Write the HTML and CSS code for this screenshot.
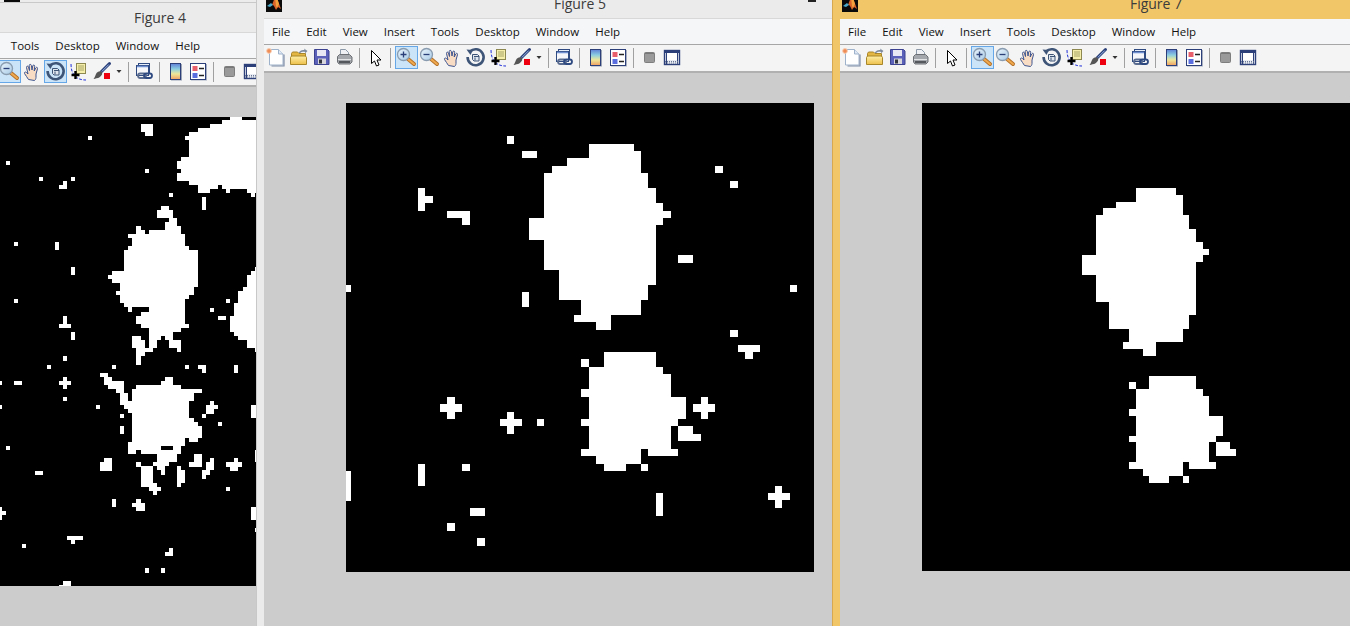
FILE: index.html
```html
<!DOCTYPE html>
<html lang="en">
<head>
<meta charset="utf-8">
<title>Figures</title>
<link rel="stylesheet" href="styles.css">
</head>
<body>
<svg class="defs" aria-hidden="true">
  <defs>
    <linearGradient id="cb" x1="0" y1="0" x2="0" y2="1">
      <stop offset="0" stop-color="#5f7fd8"/><stop offset=".35" stop-color="#8ccfe0"/><stop offset=".65" stop-color="#eee79a"/><stop offset="1" stop-color="#f0a060"/>
    </linearGradient>
    <linearGradient id="lens" x1="0" y1="0" x2="1" y2="1">
      <stop offset="0" stop-color="#eaf4fc"/><stop offset="1" stop-color="#a9cbe6"/>
    </linearGradient>
    <linearGradient id="fold" x1="0" y1="0" x2="0" y2="1">
      <stop offset="0" stop-color="#fdeea6"/><stop offset="1" stop-color="#eec04a"/>
    </linearGradient>
    <symbol id="logo" viewBox="0 0 16 16">
      <rect width="16" height="16" fill="#0a0a0a"/>
      <path d="M6 9l3-8 2 1 4 11-3-2-2 3-2-4-1-1z" fill="#d9632a"/>
      <path d="M9 1l2 1 2 6-2 4-1-2z" fill="#f2a23c"/>
      <path d="M1 10l4-3 2 2-3 2z" fill="#4aa8c8"/>
    </symbol>
    <symbol id="new" viewBox="0 0 23 23">
      <path d="M5.500 3.500h9l4.500 4.500v11h-13.500z" fill="#fff" stroke="#9fb2cc"/>
      <path d="M20 8.500v11.500H7.500" fill="none" stroke="#7d8ca6" stroke-width="1.200"/>
      <path d="M14.500 3.500v4.500h4.500" fill="#dfe8f4" stroke="#9fb2cc"/>
      <circle cx="5" cy="5" r="2.400" fill="#ef8c55" stroke="#f8cdb0"/>
    </symbol>
    <symbol id="open" viewBox="0 0 23 23">
      <path d="M4.500 18.500v-11l1-1.500h5l1.500 1.500h6.500v11z" fill="#e3b643" stroke="#a8862a"/>
      <path d="M3.500 18.500v-7l1-1.500h14l1 1.500v7z" fill="url(#fold)" stroke="#a8862a"/>
      <path d="M11.500 7c1.500-2.500 3.500-3.500 6-3l-.5-1.500 3.500 2.500-2.500 2.500.2-1.500c-2-.5-4 0-5 1z" fill="#7f8ca0"/>
    </symbol>
    <symbol id="save" viewBox="0 0 23 23">
      <path d="M4.500 3.500h13l1.500 1.500v13.500h-14.500z" fill="#5b60b8" stroke="#3c4290"/>
      <rect x="7" y="4" width="9" height="6" fill="#e8e8f4"/>
      <rect x="8" y="12.500" width="8" height="5.500" fill="#d6d6dc"/>
      <rect x="9" y="13.500" width="3" height="4" fill="#33363f"/>
    </symbol>
    <symbol id="print" viewBox="0 0 23 23">
      <path d="M7.500 3.500h5l3 3v4h-8z" fill="#eef0f4" stroke="#8c99a8"/>
      <path d="M4.500 10.500l2-2h10l2.500 2.500v5l-2 2h-11l-1.500-2z" fill="#a4a8ac" stroke="#6c7074"/>
      <path d="M5 13.500h13" stroke="#e2e4e6"/>
      <path d="M6 16h11" stroke="#55585c" stroke-width="2"/>
    </symbol>
    <symbol id="arrow" viewBox="0 0 23 23">
      <path d="M7.500 4.500v13l3-2.500 2 5 2.500-1-2-5h4z" fill="#fff" stroke="#000"/>
    </symbol>
    <symbol id="zin" viewBox="0 0 23 23">
      <path d="M13 13l6 5" stroke="#b5722a" stroke-width="4" stroke-linecap="round"/>
      <path d="M13.500 13.500l5.500 4.500" stroke="#f0a94e" stroke-width="2" stroke-linecap="round"/>
      <circle cx="8.500" cy="8.500" r="6" fill="url(#lens)" stroke="#8a9db0" stroke-width="1.300"/>
      <path d="M5.500 8.500h6M8.500 5.500v6" stroke="#2a3f78" stroke-width="1.300"/>
    </symbol>
    <symbol id="zout" viewBox="0 0 23 23">
      <path d="M13 13l6 5" stroke="#b5722a" stroke-width="4" stroke-linecap="round"/>
      <path d="M13.500 13.500l5.500 4.500" stroke="#f0a94e" stroke-width="2" stroke-linecap="round"/>
      <circle cx="8.500" cy="8.500" r="6" fill="url(#lens)" stroke="#8a9db0" stroke-width="1.300"/>
      <path d="M5.500 8.500h6" stroke="#2a3f78" stroke-width="1.300"/>
    </symbol>
    <symbol id="hand" viewBox="0 0 23 23">
      <path d="M7.500 19.500c-1-2-3-4-4-6-.5-1.500 1-2 2-1l1.500 1.500-1.500-6.500c-.3-1.500 1.500-2 2-.5l1 3.500-.3-5c0-1.500 2-1.500 2.200 0l.6 4.500.7-4c.3-1.500 2.200-1.200 2 .3l-.5 4.700 1.500-3c.7-1.300 2.300-.7 1.800.7l-1.500 5.300v3.500c0 1.500-1 2.500-1.500 3z" fill="#f9dcc4" stroke="#3d5590" stroke-width="1" stroke-linejoin="round"/>
    </symbol>
    <symbol id="rotate" viewBox="0 0 23 23">
      <path d="M6 5.500a8 8 0 1 1-2.400 5.500" fill="none" stroke="#3f5578" stroke-width="2.600"/>
      <path d="M2.500 3.500l6.500.5-2.500 5z" fill="#3f5578"/>
      <path d="M8.500 8.500h5l1.500 1.500v5h-5l-1.500-1.500z" fill="#dfe6ee" stroke="#3f5578"/>
      <path d="M11 11.500v3M10 10.500h5" stroke="#3f5578"/>
    </symbol>
    <symbol id="tip" viewBox="0 0 23 23">
      <path d="M4 4c0 5 1 9 4 12s6 4 11 4" fill="none" stroke="#2030d8" stroke-dasharray="3 1.500"/>
      <rect x="9.500" y="3.500" width="9" height="10" fill="#f4eeaa" stroke="#8c8850"/>
      <path d="M11 6h6M11 8h6M11 10h6" stroke="#a8a468"/>
      <path d="M8.500 11v8M4.500 15h8" stroke="#000" stroke-width="2.400"/>
    </symbol>
    <symbol id="brush" viewBox="0 0 23 23">
      <path d="M19.500 3.500l-8 8" stroke="#2a3f78" stroke-width="3" stroke-linecap="round"/>
      <path d="M18.800 4.500l-7 7" stroke="#9db8e6" stroke-width="1"/>
      <path d="M6 14c1.500-3 5-3.500 6-1.500s-2 5-4 5.500-4.500 1-4.500 1 1.500-2 2.500-5z" fill="#555"/>
      <rect x="14" y="13" width="6" height="6" fill="#ee0010"/>
    </symbol>
    <symbol id="drop" viewBox="0 0 12 23">
      <path d="M3.500 10h5l-2.500 3z" fill="#333"/>
    </symbol>
    <symbol id="link" viewBox="0 0 23 23">
      <rect x="5.500" y="3.500" width="11" height="9" fill="#e8eef8" stroke="#2f4a80"/>
      <rect x="3.500" y="5.500" width="12" height="10" fill="#f4f6fa" stroke="#2f4a80"/>
      <path d="M4 6.500h11" stroke="#6f8fd0" stroke-width="1.500"/>
      <rect x="5" y="13.500" width="8" height="4.500" rx="2.200" fill="none" stroke="#5a6c90" stroke-width="1.800"/>
      <rect x="11" y="13.500" width="8" height="4.500" rx="2.200" fill="none" stroke="#2f4a80" stroke-width="1.800"/>
    </symbol>
    <symbol id="cbar" viewBox="0 0 23 23">
      <rect x="7" y="4" width="11" height="16.500" fill="#9aa4b4"/>
      <rect x="6.500" y="3.500" width="10" height="16" fill="url(#cb)" stroke="#2c3f78"/>
    </symbol>
    <symbol id="legend" viewBox="0 0 23 23">
      <rect x="4" y="4" width="16" height="16.500" fill="#a8b0c0"/>
      <rect x="3.500" y="3.500" width="15" height="16" fill="#fff" stroke="#2c3f78"/>
      <rect x="5.500" y="6" width="5" height="5" fill="#e8606c"/>
      <rect x="5.500" y="13" width="5" height="5" fill="#5a6ee0"/>
      <path d="M12 8.500h5M12 15.500h5" stroke="#222" stroke-width="1.400"/>
    </symbol>
    <symbol id="hide" viewBox="0 0 23 23">
      <rect x="6.500" y="6.500" width="10" height="10" rx="1" fill="#9a9a9a" stroke="#7e7e7e"/>
      <path d="M7 7.500h9" stroke="#787878"/>
    </symbol>
    <symbol id="show" viewBox="0 0 23 23">
      <rect x="3.500" y="4.500" width="15" height="14" fill="#e8ecf2" stroke="#2c3f78" stroke-width="1.400"/>
      <path d="M3.500 6h15" stroke="#2c3f78" stroke-width="2"/>
      <rect x="6" y="7" width="10" height="7" fill="#fff"/>
      <path d="M5.500 7v11M16.500 7v11" stroke="#2c3f78"/>
      <path d="M4 15.500h14M4 17h14" stroke="#6a7898" stroke-dasharray="1 1"/>
    </symbol>
  </defs>
</svg>

<div class="strip"><svg class="logo"><use href="#logo"/></svg></div>

<section class="window win4">
  <header class="title"><svg class="logo"><use href="#logo"/></svg><span class="title-text">Figure 4</span></header>
  <nav class="menu"><span>File</span><span>Edit</span><span>View</span><span>Insert</span><span>Tools</span><span>Desktop</span><span>Window</span><span>Help</span></nav>
  <div class="toolbar">
    <svg class="t"><use href="#new"/></svg><svg class="t"><use href="#open"/></svg><svg class="t"><use href="#save"/></svg><svg class="t"><use href="#print"/></svg><i class="sep"></i>
    <svg class="t"><use href="#arrow"/></svg><i class="sep"></i>
    <svg class="t"><use href="#zin"/></svg><svg class="t on"><use href="#zout"/></svg><svg class="t"><use href="#hand"/></svg><svg class="t on"><use href="#rotate"/></svg><svg class="t"><use href="#tip"/></svg><svg class="t"><use href="#brush"/></svg><svg class="d"><use href="#drop"/></svg><i class="sep"></i>
    <svg class="t"><use href="#link"/></svg><i class="sep"></i>
    <svg class="t"><use href="#cbar"/></svg><svg class="t"><use href="#legend"/></svg><i class="sep"></i>
    <svg class="t"><use href="#hide"/></svg><svg class="t"><use href="#show"/></svg>
  </div>
  <div class="canvas">
    <svg class="plot" viewBox="-74 117 468 469"><rect class="bg" x="-74" y="117" width="468" height="469"/>
    <path class="px" d="M141 124H153V132H141zM145 132H153V136H145zM88 136H92V140H88zM6 161H10V165H6zM39 177H43V181H39zM71 177H75V181H71zM63 181H67V185H63zM59 185H67V189H59zM145 169H149V173H145zM169 193H173V197H169zM202 197H206V210H202zM14 242H18V246H14zM55 242H59V250H55zM71 267H75V275H71zM14 299H18V303H14zM63 316H67V324H63zM59 324H71V328H59zM71 332H75V340H71zM63 356H67V361H63zM226 299H230V303H226zM210 308H214V312H210zM218 316H226V320H218z
    M230 117H242V120H230zM222 120H256V124H222zM210 124H256V128H210zM198 128H256V132H198zM189 132H256V136H189zM185 136H256V140H185zM189 140H256V157H189zM181 157H256V161H181zM177 161H256V169H177zM181 169H256V173H181zM177 173H256V181H177zM189 181H256V185H189zM198 185H218V189H198zM222 185H256V189H222zM198 189H210V193H198zM226 189H230V193H226zM247 189H256V193H247zM251 193H255V197H251z
    M161 206H169V210H161zM157 210H173V218H157zM169 218H177V222H169zM165 222H177V226H165zM136 226H141V230H136zM165 226H181V230H165zM136 230H145V234H136zM149 230H181V234H149zM128 234H185V238H128zM132 238H185V246H132zM128 246H189V250H128zM124 250H198V271H124zM112 271H198V275H112zM108 275H198V279H108zM112 279H198V283H112zM120 283H198V287H120zM120 287H194V291H120zM116 291H194V295H116zM120 295H189V299H120zM120 299H185V303H120zM124 303H185V307H124zM128 307H132V312H128zM149 307H185V312H149zM141 312H185V316H141zM136 316H185V324H136zM141 324H189V328H141zM149 328H181V332H149zM149 332H173V336H149zM132 336H141V340H132zM149 336H161V340H149zM165 336H173V340H165zM132 340H145V348H132zM149 340H157V348H149zM169 340H181V348H169zM136 348H153V352H136zM177 348H181V352H177zM136 352H145V356H136zM136 356H141V365H136z
    M255 267H256V271H255zM251 271H256V275H251zM247 275H256V287H247zM243 287H256V291H243zM238 291H256V303H238zM234 303H256V316H234zM230 316H256V332H230zM234 332H256V336H234zM238 336H256V340H238zM247 340H256V348H247zM255 348H256V352H255z
    M47 365H51V369H47zM112 365H116V369H112zM177 350H181V352H177zM185 365H189V369H185zM198 365H206V369H198zM202 369H206V373H202zM234 365H238V373H234zM0 381H2V385H0zM14 381H22V385H14zM63 377H67V389H63zM59 381H71V385H59zM63 397H67V401H63zM0 405H2V409H0zM96 405H100V409H96z
    M100 373H108V377H100zM104 377H112V381H104zM104 381H124V385H104zM108 385H124V389H108zM116 389H124V393H116zM120 393H128V401H120zM120 401H132V405H120zM124 405H132V409H124zM128 409H132V413H128z
    M165 377H173V381H165zM161 381H173V385H161zM136 385H181V389H136zM132 389H202V393H132zM132 393H194V401H132zM132 401H189V418H132zM132 418H194V422H132zM132 422H198V426H132zM132 426H202V438H132zM132 438H185V442H132zM189 438H198V442H189zM128 442H185V446H128zM128 446H161V450H128zM173 446H181V450H173zM128 450H136V454H128zM141 450H181V454H141zM157 454H177V462H157zM153 462H169V466H153zM136 462H141V467H136zM157 466H165V470H157zM141 466H153V483H141zM177 466H181V470H177zM161 470H165V475H161zM177 470H185V483H177zM141 483H157V487H141zM177 483H181V487H177zM149 487H161V491H149zM153 491H157V495H153z
    M104 458H112V462H104zM100 462H112V471H100zM120 414H124V418H120zM120 426H124V434H120zM202 414H206V418H202zM210 401H214V405H210zM206 405H218V409H206zM206 409H214V414H206zM218 422H222V426H218zM251 405H256V418H251zM6 446H10V450H6zM194 454H202V462H194zM189 462H202V467H189zM210 458H214V462H210zM206 462H214V470H206zM202 470H210V475H202zM202 475H206V479H202zM234 458H238V462H234zM226 462H242V467H226zM230 467H238V471H230zM255 450H256V462H255zM35 471H43V475H35zM112 499H116V507H112zM136 499H141V503H136zM132 503H145V507H132zM136 507H145V511H136zM226 487H230V491H226zM0 507H2V520H0zM2 511H6V515H2zM251 507H256V520H251zM255 528H256V532H255zM67 536H83V540H67zM71 540H75V544H71zM22 544H26V548H22zM169 548H173V552H169zM165 552H173V556H165zM145 568H149V573H145zM161 568H165V573H161zM63 581H71V585H63zM59 585H71V586H59z"/></svg>
  </div>
</section>

<section class="window win5">
  <header class="title"><svg class="logo"><use href="#logo"/></svg><span class="title-text">Figure 5</span><i class="min"></i></header>
  <nav class="menu"><span>File</span><span>Edit</span><span>View</span><span>Insert</span><span>Tools</span><span>Desktop</span><span>Window</span><span>Help</span></nav>
  <div class="toolbar">
    <svg class="t"><use href="#new"/></svg><svg class="t"><use href="#open"/></svg><svg class="t"><use href="#save"/></svg><svg class="t"><use href="#print"/></svg><i class="sep"></i>
    <svg class="t"><use href="#arrow"/></svg><i class="sep"></i>
    <svg class="t on"><use href="#zin"/></svg><svg class="t"><use href="#zout"/></svg><svg class="t"><use href="#hand"/></svg><svg class="t"><use href="#rotate"/></svg><svg class="t"><use href="#tip"/></svg><svg class="t"><use href="#brush"/></svg><svg class="d"><use href="#drop"/></svg><i class="sep"></i>
    <svg class="t"><use href="#link"/></svg><i class="sep"></i>
    <svg class="t"><use href="#cbar"/></svg><svg class="t"><use href="#legend"/></svg><i class="sep"></i>
    <svg class="t"><use href="#hide"/></svg><svg class="t"><use href="#show"/></svg>
  </div>
  <div class="canvas">
    <svg class="plot" viewBox="346 103 468 469"><rect class="bg" x="346" y="103" width="468" height="469"/>
    <path class="px" d="M507 136H514V144H507zM522 151H537V158H522zM418 188H425V211H418zM425 196H433V203H425zM447 211H470V218H447zM462 218H470V225H462zM346 285H351V292H346zM522 292H529V307H522z
    M589 144H634V151H589zM589 151H641V158H589zM567 158H641V166H567zM552 166H641V173H552zM544 173H648V188H544zM544 188H656V203H544zM544 203H663V211H544zM544 211H671V218H544zM529 218H663V225H529zM529 225H656V240H529zM544 240H656V270H544zM559 270H656V285H559zM559 285H648V300H559zM581 300H641V315H581zM574 315H611V322H574zM596 322H611V330H596z
    M715 166H723V173H715zM730 181H738V188H730zM678 255H693V263H678zM790 285H797V292H790zM730 330H738V337H730z
    M447 397H455V419H447zM440 404H462V412H440zM507 412H514V434H507zM500 419H522V426H500zM537 419H544V426H537zM346 471H351V501H346zM418 464H425V486H418zM462 464H470V471H462zM470 508H485V516H470zM447 523H455V531H447zM477 538H485V546H477z
    M738 345H760V352H738zM745 352H753V359H745zM581 359H589V367H581zM604 352H656V367H604zM589 367H663V374H589zM589 374H671V397H589zM581 389H589V397H581zM589 397H686V419H589zM581 419H678V426H581zM589 426H671V449H589zM581 449H641V456H581zM648 449H678V456H648zM596 456H641V464H596zM604 464H626V471H604zM641 464H648V471H641zM678 426H693V434H678zM678 434H701V441H678zM701 397H708V419H701zM693 404H715V412H693zM775 486H782V508H775zM768 493H790V500H768zM656 493H663V516H656z"/></svg>
  </div>
</section>

<section class="window win7">
  <header class="title"><svg class="logo"><use href="#logo"/></svg><span class="title-text">Figure 7</span></header>
  <nav class="menu"><span>File</span><span>Edit</span><span>View</span><span>Insert</span><span>Tools</span><span>Desktop</span><span>Window</span><span>Help</span></nav>
  <div class="toolbar">
    <svg class="t"><use href="#new"/></svg><svg class="t"><use href="#open"/></svg><svg class="t"><use href="#save"/></svg><svg class="t"><use href="#print"/></svg><i class="sep"></i>
    <svg class="t"><use href="#arrow"/></svg><i class="sep"></i>
    <svg class="t on"><use href="#zin"/></svg><svg class="t"><use href="#zout"/></svg><svg class="t"><use href="#hand"/></svg><svg class="t"><use href="#rotate"/></svg><svg class="t"><use href="#tip"/></svg><svg class="t"><use href="#brush"/></svg><svg class="d"><use href="#drop"/></svg><i class="sep"></i>
    <svg class="t"><use href="#link"/></svg><i class="sep"></i>
    <svg class="t"><use href="#cbar"/></svg><svg class="t"><use href="#legend"/></svg><i class="sep"></i>
    <svg class="t"><use href="#hide"/></svg><svg class="t"><use href="#show"/></svg>
  </div>
  <div class="canvas">
    <svg class="plot plot-short" viewBox="922 103 468 468"><rect class="bg" x="922" y="103" width="468" height="468"/>
    <path class="px" d="M1136 188H1176V195H1136zM1136 195H1183V202H1136zM1116 202H1183V208H1116zM1103 208H1183V215H1103zM1096 215H1189V229H1096zM1096 229H1196V242H1096zM1096 242H1203V249H1096zM1096 249H1209V255H1096zM1082 255H1203V262H1082zM1082 262H1196V275H1082zM1096 275H1196V302H1096zM1109 302H1196V315H1109zM1109 315H1189V329H1109zM1129 329H1183V342H1129zM1123 342H1156V349H1123zM1143 349H1156V356H1143z
    M1149 376H1196V389H1149zM1129 382H1136V389H1129zM1136 389H1203V396H1136zM1136 396H1209V409H1136zM1129 409H1209V416H1129zM1136 416H1223V436H1136zM1129 436H1216V442H1129zM1136 442H1209V462H1136zM1216 442H1230V449H1216zM1216 449H1236V456H1216zM1129 462H1183V469H1129zM1189 462H1216V469H1189zM1143 469H1183V476H1143zM1149 476H1169V483H1149zM1183 476H1189V483H1183z"/></svg>
  </div>
</section>
</body>
</html>
```
FILE: styles.css
```css
html, body {
  margin: 0;
  height: 100%;
  overflow: hidden;
  background: #ebebeb;
  font-family: "Open Sans", "Noto Sans", "Liberation Sans", sans-serif;
}

.defs { position: absolute; width: 0; height: 0; }

.strip {
  position: absolute;
  left: 0;
  top: 0;
  width: 260px;
  height: 2px;
  padding-left: 2px;
  background: #ececec;
  border-bottom: 1px solid #c9c9c9;
  display: flex;
  align-items: flex-end;
  overflow: hidden;
}

.window {
  position: absolute;
  width: 568px;
  height: 700px;
  padding: 0 8px;
  display: flex;
  flex-direction: column;
  background: #ebebeb;
  overflow: hidden;
}
.win4 { left: -164px; top: 3px; }
.win5 { left: 256px; top: -11px; padding-left: 7px; border-left: 1px solid #c8c8c8; }
.win7 { left: 832px; top: -11px; padding-left: 7px; background: #f0c668; border-left: 1px solid #d8a850; }

.title {
  flex: none;
  height: 29px;
  display: flex;
  align-items: center;
  position: relative;
  border-bottom: 1px solid #d8d8d8;
}
.win7 .title { border-bottom-color: #f0c668; }
.logo { flex: none; width: 16px; height: 16px; margin-left: 2px; }
.title-text {
  flex: 1;
  text-align: center;
  padding: 0 2px 1px 48px;
  font-size: 14px;
  color: #3b3b3b;
}
.min {
  position: absolute;
  right: 16px;
  top: 11px;
  width: 8px;
  height: 2px;
  background: #222;
}

.menu {
  flex: none;
  height: 25px;
  display: flex;
  align-items: center;
  gap: 16px;
  padding-left: 8px;
  background: #f5f6f7;
  border-bottom: 1px solid #a6a6a6;
  font-size: 11.5px;
  color: #111;
}

.toolbar {
  flex: none;
  height: 25px;
  padding-bottom: 1px;
  display: flex;
  align-items: center;
  background: #f4f4f5;
  border-bottom: 2px solid #b0b0b0;
}
.t { flex: none; width: 23px; height: 23px; box-sizing: border-box; }
.t.on { background: #cce4f7; outline: 1px solid #66a7e8; outline-offset: -1px; }
.d { flex: none; width: 12px; height: 23px; }
.sep { flex: none; width: 1px; height: 20px; margin: 0 4px 0 3px; background: #a0a0a0; }

.canvas {
  flex: 1;
  background: #cccccc;
  padding: 30px 0 0 82px;
}
.plot { display: block; width: 468px; height: 469px; shape-rendering: crispEdges; }
.plot-short { height: 468px; }
.bg { fill: #000; }
.px { fill: #fff; }
```
